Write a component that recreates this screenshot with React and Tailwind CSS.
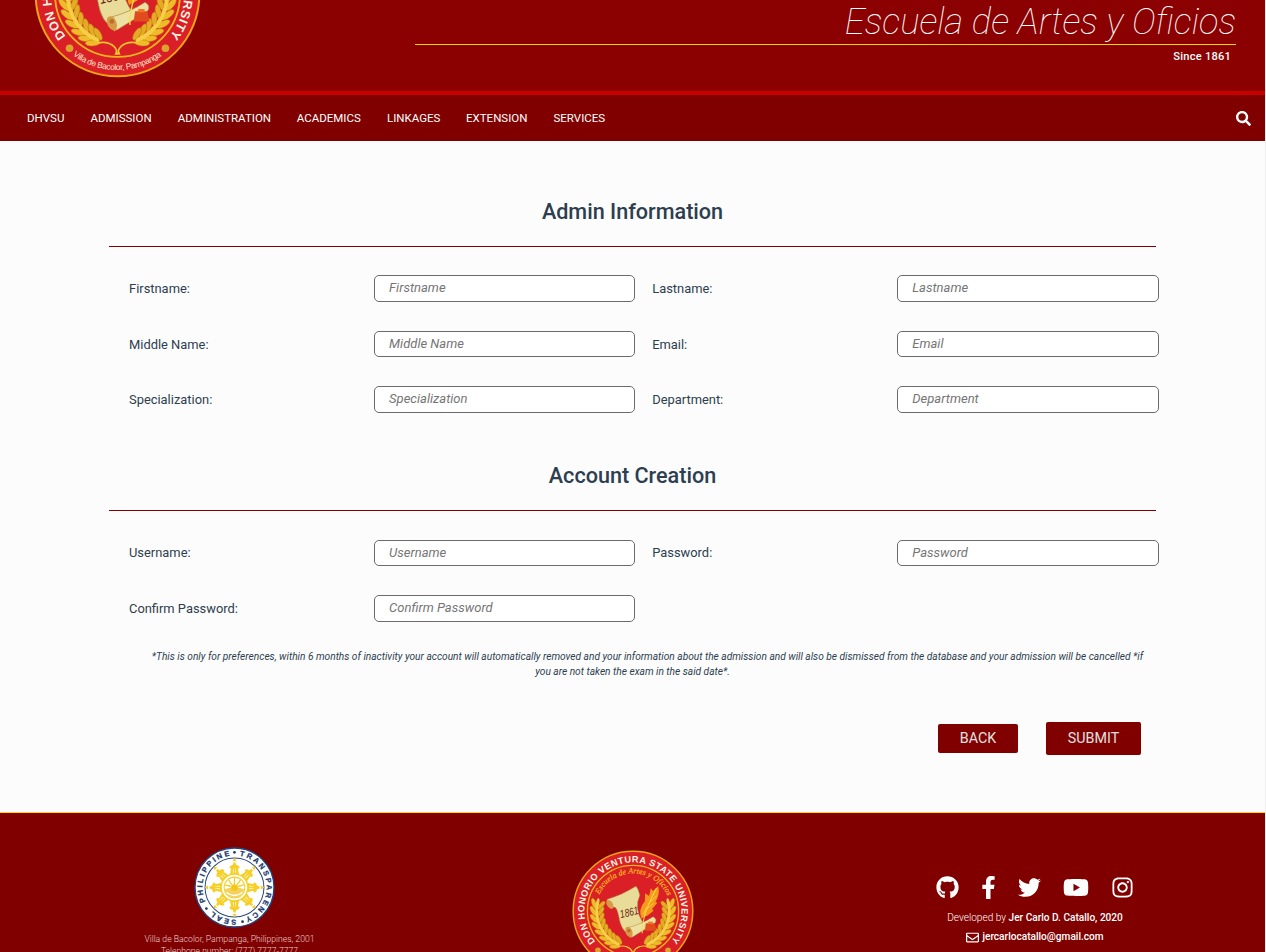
import React from "react";
import { FaSearch, FaGithub, FaFacebookF, FaTwitter, FaYoutube, FaInstagram, FaRegEnvelope } from "react-icons/fa";

const NAV = [
  ["DHVSU", "w-[37.5px]"],
  ["ADMISSION", "w-[61.3px]"],
  ["ADMINISTRATION", "w-[93px]"],
  ["ACADEMICS", "w-[64.2px]"],
  ["LINKAGES", "w-[53px]"],
  ["EXTENSION", "w-[61.5px]"],
  ["SERVICES", "w-[52px]"],
];

const LEAVES = [-11, 0, 11, 22, 33, 44, 54, 63];

function Laurel() {
  return (
    <g>
      {LEAVES.map((deg) => (
        <g key={deg} transform={`rotate(${-deg}) translate(-60 0)`}>
          <ellipse cx="-5" cy="-3" rx="3.7" ry="9" transform="rotate(-30)" fill="#efbb2a" stroke="#b97812" strokeWidth="0.6" />
          <ellipse cx="6" cy="-3" rx="3.5" ry="8.5" transform="rotate(32)" fill="#e5ab24" stroke="#b97812" strokeWidth="0.6" />
          <ellipse cx="0" cy="-2" rx="2.6" ry="8" fill="#f5cf45" />
        </g>
      ))}
      <path d="M-25 59C-14 56 -4 60 -1 68L-2 72" fill="none" stroke="#f2c62e" strokeWidth="2" />
    </g>
  );
}

function UniversitySeal({ id, className }) {
  return (
    <svg viewBox="-101 -101 202 202" className={className}>
      <defs>
        <path id={`${id}-outer`} d="M-62.6 50.7A80.5 80.5 0 1 1 62.6 50.7" />
        <path id={`${id}-script`} d="M-59 -20A62.3 62.3 0 0 1 60.5 -15" />
        <path id={`${id}-bottom`} d="M-55 73A91.4 91.4 0 0 0 55 73" />
      </defs>
      <circle r="99" fill="#da1f26" stroke="#eaa516" strokeWidth="2.4" />
      <circle r="75.5" fill="#da1f26" stroke="#f1b51c" strokeWidth="2.2" />
      <text fontFamily="Liberation Sans, sans-serif" fontWeight="bold" fontSize="15.2" fill="#fff6e2">
        <textPath href={`#${id}-outer`} textLength="361">DON HONORIO VENTURA STATE UNIVERSITY</textPath>
      </text>
      <text fontFamily="Liberation Serif, serif" fontStyle="italic" fontSize="13" fill="#f7b51b" stroke="#f7b51b" strokeWidth="0.4">
        <textPath href={`#${id}-script`} startOffset="8" textLength="142">Escuela de Artes y Oficios</textPath>
      </text>
      <text fontFamily="Liberation Sans, sans-serif" fontSize="10.2" fill="#fbe3c8">
        <textPath href={`#${id}-bottom`} startOffset="1" textLength="115">Villa de Bacolor, Pampanga</textPath>
      </text>
      <circle cx="-58" cy="65" r="4.6" fill="#d9a52b" />
      <circle cx="58" cy="65" r="4.6" fill="#d9a52b" />
      <Laurel />
      <g transform="scale(-1 1)"><Laurel /></g>
      <path d="M-4 73Q0 66 4 73Z" fill="#f2c62e" />
      <g transform="scale(.551) translate(-247.5 -213)">
        <path d="M170 178Q215 165 256 139Q262 142 268 166Q250 205 276 246L240 284Q212 278 204 226Q196 190 184 206Q170 196 170 178Z" fill="#e8dc98" stroke="#a58a42" strokeWidth="1.5" />
        <path d="M229 264Q275 252 308 230Q322 238 313 250L246 291Q226 290 229 264Z" fill="#ece0a2" stroke="#a58a42" strokeWidth="1.5" />
        <path d="M168 181Q164 198 180 206Q194 205 186 188Q178 177 168 181Z" fill="#d99a48" />
        <path d="M225 264Q220 286 242 294Q252 280 240 264Q231 257 225 264Z" fill="#d69a46" />
        <circle cx="235" cy="272" r="5" fill="#b96e2d" />
        <path d="M286 250H313L318 272H283Z" fill="#e14c1c" />
        <path d="M293 245H307V252H293Z" fill="#ef7426" />
        <path d="M273 236Q262 208 283 184L284 160L296 168L301 145L308 153L323 138Q330 162 315 186L321 188L305 207L309 212Q290 229 279 232Z" fill="#f59b1c" />
        <path d="M275 280Q271 232 318 144" fill="none" stroke="#f9dc4c" strokeWidth="3" />
        <path d="M277 224L290 200M284 211L309 190M292 193L318 168" stroke="#fbc93b" strokeWidth="3" />
        <text x="211" y="234" transform="rotate(-13 211 234)" fontFamily="Liberation Sans, sans-serif" fontStyle="italic" fontSize="33" textLength="56" lengthAdjust="spacingAndGlyphs" fill="#6d1d15">1861</text>
      </g>
    </svg>
  );
}

const RAYS = [0, 45, 90, 135, 180, 225, 270, 315];

function TransparencySeal({ className }) {
  return (
    <svg viewBox="-121 -121 242 242" className={className}>
      <defs>
        <path id="ts-ring" d="M0 -96A96 96 0 0 1 0 96A96 96 0 0 1 0 -96" />
      </defs>
      <circle r="118" fill="#fff" stroke="#23457e" strokeWidth="4" />
      <circle r="88" fill="#fff" stroke="#23457e" strokeWidth="3" />
      <g fontFamily="Liberation Sans, sans-serif" fontWeight="bold" fontSize="22" fill="#1c3a70" stroke="#1c3a70" strokeWidth="0.8">
        <text><textPath href="#ts-ring" startOffset="15" textLength="253">TRANSPARENCY</textPath></text>
        <text><textPath href="#ts-ring" startOffset="296" textLength="76">SEAL</textPath></text>
        <text><textPath href="#ts-ring" startOffset="408" textLength="180">PHILIPPINE</textPath></text>
      </g>
      <g fill="#1c3a70">
        <circle cx="0" cy="-105" r="4" />
        <circle cx="24" cy="102" r="4" />
        <circle cx="-84" cy="63" r="4" />
      </g>
      {RAYS.map((deg) => (
        <g key={deg} transform={`rotate(${deg})`} fill="#f7cf24">
          <path d="M-14 -38L-10 -56L-16 -59L-11 -66L-5 -67L-3 -75H3L5 -67L11 -66L16 -59L10 -56L14 -38Z" />
          <path d="M0 -89L6 -79H-6Z" />
          <path d="M-5 -44L-4 -62L-2 -44ZM5 -44L4 -62L2 -44Z" fill="#fff" />
        </g>
      ))}
      <circle r="40" fill="#fff" stroke="#f7cf24" strokeWidth="4" />
      <circle r="31" fill="none" stroke="#f7cf24" strokeWidth="3" />
      <path d="M-30 6Q0 -8 30 6Q20 30 0 30Q-20 30 -30 6Z" fill="#f2d35c" />
      <path d="M-24 14Q0 34 24 14" fill="none" stroke="#fff" strokeWidth="4" />
      <circle r="10" fill="#f5c71a" />
      <path d="M0 -30V-8M-18 -22L-7 -8M18 -22L7 -8M-28 -8L-9 -3M28 -8L9 -3" stroke="#f7cf24" strokeWidth="4" />
    </svg>
  );
}

function Field({ label, type = "text" }) {
  return (
    <label className="flex h-[26.5px] items-center pl-5">
      <span className="w-[245px] shrink-0 pt-px text-[12.9px] leading-[20px]">{label}:</span>
      <input
        type={type}
        placeholder={label}
        className="h-[26.5px] w-[261.4px] shrink-0 rounded-[5px] border border-[#6b6b6b] bg-white px-[14.1px] pb-[1.5px] text-[13px] italic outline-none placeholder:text-[#757575]"
      />
    </label>
  );
}

function Section({ title, children }) {
  return (
    <section>
      <h2 className="h-[50px] border-b border-[#800000] text-center text-[21.6px] leading-[30px] font-medium">{title}</h2>
      <div className="grid grid-cols-[523.2px_523.4px] gap-y-[29px] pt-[28.25px]">{children}</div>
    </section>
  );
}

export default function App() {
  return (
    <div className="h-[952px] overflow-hidden bg-[#f0f0f0] pr-px font-['Roboto',sans-serif] text-[#2c3e50]">
      <div className="bg-[#fcfcfc]">
        <header className="flex h-[95px] items-end justify-between overflow-hidden border-b-4 border-[#c80000] bg-[#8b0000] pr-[29px] pl-[34px] text-white">
          <UniversitySeal id="header" className="mb-[13.5px] h-[167px] w-[167px] shrink-0" />
          <div className="flex h-[91px] w-[821px] flex-col">
            <div className="flex h-[45px] items-end justify-end border-b border-[#ffd700]">
              <h1 className="text-[36.4px] leading-[44px] font-thin whitespace-nowrap italic">Escuela de Artes y Oficios</h1>
            </div>
            <p className="pt-[3px] pr-[5px] text-right text-[11.1px] leading-[17px] font-medium tracking-[0.22px]">Since 1861</p>
          </div>
        </header>

        <nav className="flex h-[46px] items-center justify-between bg-[#800000] pr-[14px] pl-[27px] text-white">
          <ul className="flex gap-[26px] pb-px text-[11.5px] leading-[16px]">
            {NAV.map(([name, width]) => (
              <li key={name} className={`${width} whitespace-nowrap`}>{name}</li>
            ))}
          </ul>
          <FaSearch className="h-[15px] w-[15px]" />
        </nav>

        <main className="h-[671px] pt-[56px] pl-[109px]">
          <div className="w-[1047px]">
            <Section title="Admin Information">
              <Field label="Firstname" />
              <Field label="Lastname" />
              <Field label="Middle Name" />
              <Field label="Email" />
              <Field label="Specialization" />
              <Field label="Department" />
            </Section>
            <div className="h-[48.5px]" />
            <Section title="Account Creation">
              <Field label="Username" />
              <Field label="Password" type="password" />
              <Field label="Confirm Password" type="password" />
            </Section>
            <p className="pt-[27.5px] text-center text-[10.16px] leading-[15px] italic">
              <span className="pl-[30px]">*This is only for preferences, within 6 months of inactivity your account will automatically removed and your information about the admission and will also be dismissed from the database and your admission will be cancelled *if</span>
              <br />
              you are not taken the exam in the said date*.
            </p>
            <div className="flex items-center justify-end gap-7 pt-[43px] pr-[15px] text-[14.3px] text-[#e0e0e0]">
              <button className="h-[29px] w-[80px] rounded-[2px] bg-[#800000] leading-[29px]">BACK</button>
              <button className="h-[33px] w-[95px] rounded-[2px] bg-[#800000] pb-px leading-[31px]">SUBMIT</button>
            </div>
          </div>
        </main>

        <footer className="flex h-[140px] overflow-hidden border-t border-[#ffd700] bg-[#800000] text-white">
          <div className="flex w-[459px] shrink-0 flex-col items-center pt-[34px] text-center">
            <TransparencySeal className="ml-[10px] h-[81px] w-[81px] shrink-0" />
            <p className="pt-[5px] text-[8.65px] leading-[12px] font-light whitespace-nowrap text-[#ead0d0]">
              Villa de Bacolor, Pampanga, Philippines, 2001
              <br />
              Telephone number: (777) 7777-7777
            </p>
          </div>
          <div className="flex w-[347px] shrink-0 justify-center pt-[37px]">
            <UniversitySeal id="footer" className="h-[122px] w-[122px]" />
          </div>
          <div className="flex w-[459px] shrink-0 flex-col items-center pt-[62px]">
            <div className="mr-px flex h-6 items-center gap-[22px] text-[23px]">
              <FaGithub />
              <FaFacebookF className="w-[15px]" />
              <FaTwitter />
              <FaYoutube className="h-[23px] w-[26px]" />
              <FaInstagram />
            </div>
            <p className="mr-px pt-[11px] text-[10.1px] leading-[16px] font-light">
              Developed by <span className="font-medium">Jer Carlo D. Catallo, 2020</span>
            </p>
            <p className="mr-px flex items-center gap-[3px] pt-[3px] text-[10.1px] leading-[16px] font-medium">
              <FaRegEnvelope className="h-[13px] w-[13px]" />
              jercarlocatallo@gmail.com
            </p>
          </div>
        </footer>
      </div>
    </div>
  );
}
